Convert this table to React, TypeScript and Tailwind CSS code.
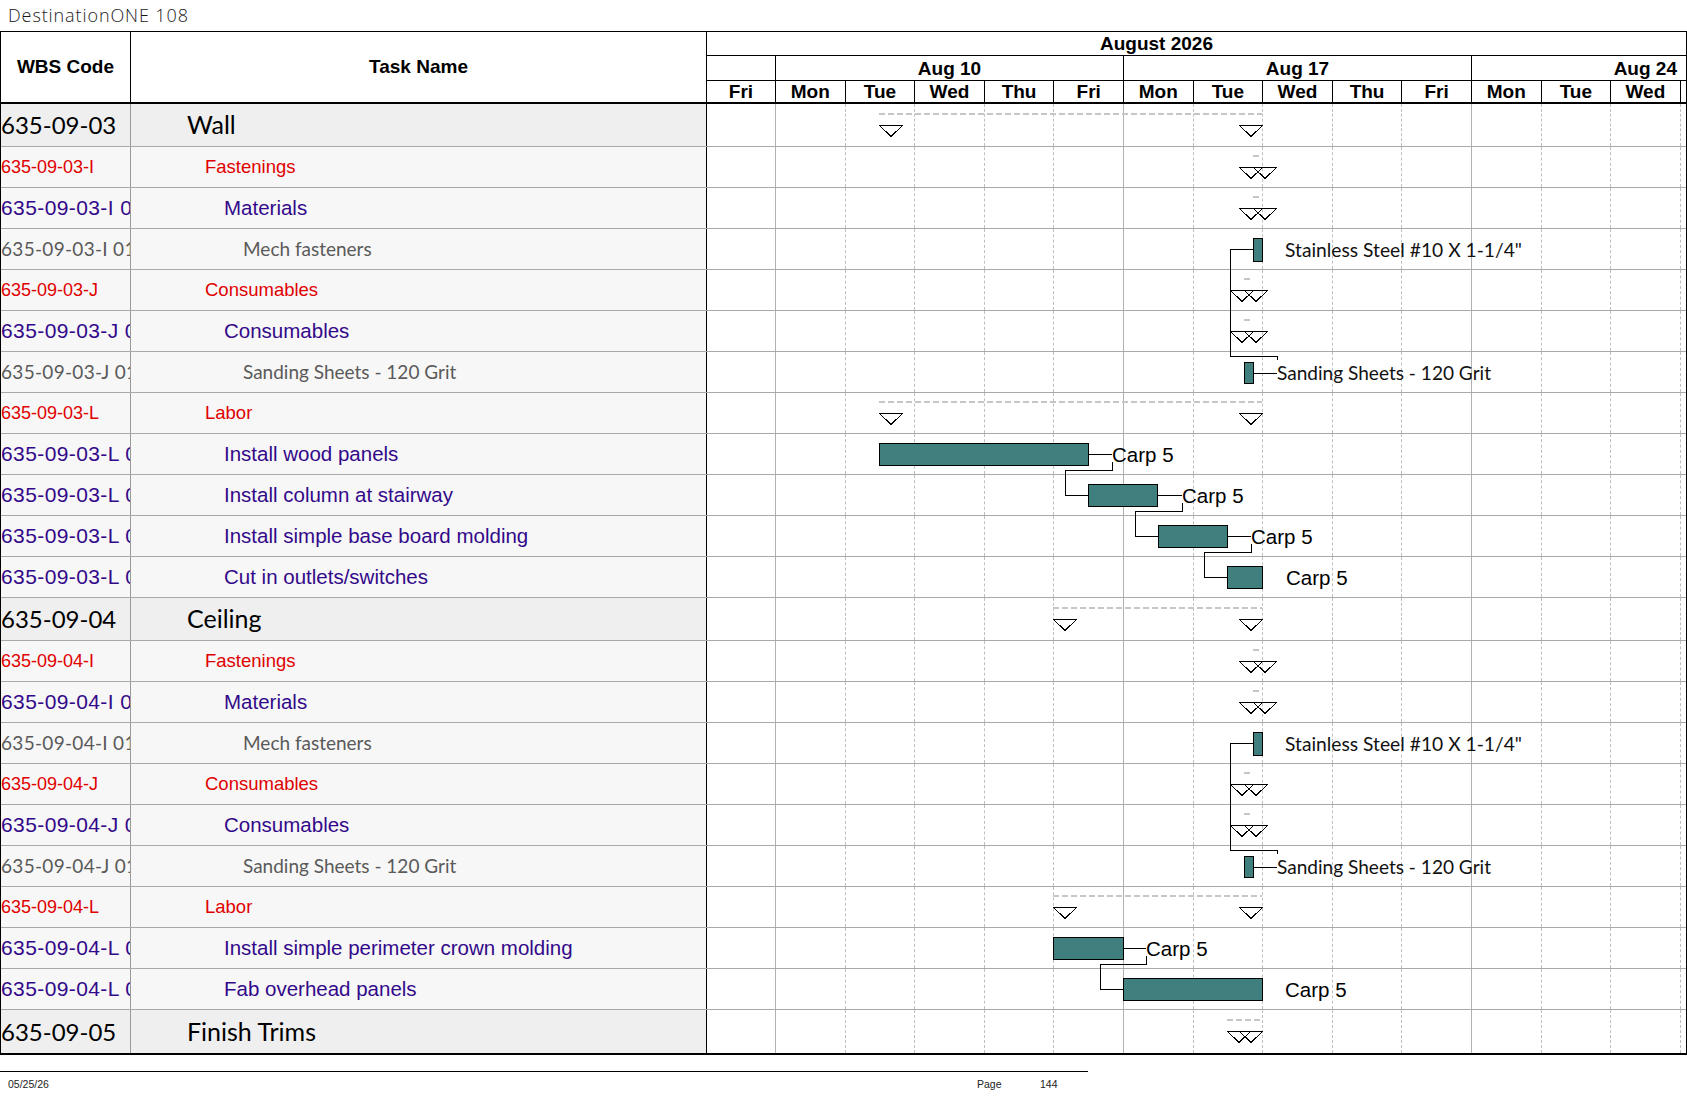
import React from "react";

type Row = { wbs: string; name: string; lvl: 1 | 2 | 3 | 4 };

const rows: Row[] = [
  { wbs: "635-09-03", name: "Wall", lvl: 1 },
  { wbs: "635-09-03-I", name: "Fastenings", lvl: 2 },
  { wbs: "635-09-03-I 01", name: "Materials", lvl: 3 },
  { wbs: "635-09-03-I 01-001", name: "Mech fasteners", lvl: 4 },
  { wbs: "635-09-03-J", name: "Consumables", lvl: 2 },
  { wbs: "635-09-03-J 01", name: "Consumables", lvl: 3 },
  { wbs: "635-09-03-J 01-001", name: "Sanding Sheets - 120 Grit", lvl: 4 },
  { wbs: "635-09-03-L", name: "Labor", lvl: 2 },
  { wbs: "635-09-03-L 01", name: "Install wood panels", lvl: 3 },
  { wbs: "635-09-03-L 02", name: "Install column at stairway", lvl: 3 },
  { wbs: "635-09-03-L 03", name: "Install simple base board molding", lvl: 3 },
  { wbs: "635-09-03-L 04", name: "Cut in outlets/switches", lvl: 3 },
  { wbs: "635-09-04", name: "Ceiling", lvl: 1 },
  { wbs: "635-09-04-I", name: "Fastenings", lvl: 2 },
  { wbs: "635-09-04-I 01", name: "Materials", lvl: 3 },
  { wbs: "635-09-04-I 01-001", name: "Mech fasteners", lvl: 4 },
  { wbs: "635-09-04-J", name: "Consumables", lvl: 2 },
  { wbs: "635-09-04-J 01", name: "Consumables", lvl: 3 },
  { wbs: "635-09-04-J 01-001", name: "Sanding Sheets - 120 Grit", lvl: 4 },
  { wbs: "635-09-04-L", name: "Labor", lvl: 2 },
  { wbs: "635-09-04-L 01", name: "Install simple perimeter crown molding", lvl: 3 },
  { wbs: "635-09-04-L 02", name: "Fab overhead panels", lvl: 3 },
  { wbs: "635-09-05", name: "Finish Trims", lvl: 1 },
];

const heights = rows.map((r) => (r.lvl === 1 ? 43 : 41));
const tops: number[] = [];
{
  let y = 104;
  for (const h of heights) {
    tops.push(y);
    y += h;
  }
}

const nameClass: Record<number, string> = {
  1: "font-['Lato',sans-serif] text-[25px] text-black",
  2: "font-['Liberation_Sans',Arial,sans-serif] text-[18.5px] text-[#e00000]",
  3: "font-['Liberation_Sans',Arial,sans-serif] text-[20.5px] text-[#33098a]",
  4: "font-['Lato',sans-serif] text-[19px] text-[#5a5a5a]",
};
const wbsClass: Record<number, string> = {
  1: "font-['Lato',sans-serif] text-[24px] text-black",
  2: "font-['Liberation_Sans',Arial,sans-serif] text-[18px] text-[#e00000]",
  3: "font-['Liberation_Sans',Arial,sans-serif] text-[21px] tracking-[0.4px] text-[#33098a]",
  4: "font-['Lato',sans-serif] text-[19px] tracking-[0.3px] text-[#5a5a5a]",
};
const indentClass: Record<number, string> = {
  1: "pl-[56px]",
  2: "pl-[74px]",
  3: "pl-[93px]",
  4: "pl-[112px]",
};

const dayNames = ["Fri", "Mon", "Tue", "Wed", "Thu", "Fri", "Mon", "Tue", "Wed", "Thu", "Fri", "Mon", "Tue", "Wed", ""];

function BodyDays() {
  return (
    <div className="grid h-full grid-cols-[69px_repeat(13,69.6px)_1fr]">
      {dayNames.map((_, i) => {
        if (i === 14) return <div key={i} />;
        const solid = i === 0 || i === 5 || i === 10;
        return (
          <div
            key={i}
            className={
              solid
                ? "border-r border-[#b2b2b2]"
                : "border-r border-dashed border-[#bfbfbf]"
            }
          />
        );
      })}
    </div>
  );
}

function Tri({ x, y }: { x: number; y: number }) {
  return (
    <path
      d={`M${x + 0.5} ${y + 0.5}H${x + 23.5}L${x + 12} ${y + 11.5}Z`}
      fill="none"
      stroke="#000"
      strokeWidth={1}
    />
  );
}

function Summary({ r, s, e }: { r: number; s: number; e: number }) {
  const t = tops[r];
  const g = rows[r].lvl === 1;
  const dy = g ? 10 : 9;
  const ty = g ? 21 : 20;
  return (
    <g>
      <line x1={s} x2={e} y1={t + dy} y2={t + dy} stroke="#c6c6c6" strokeWidth={2} strokeDasharray="6 3" />
      <Tri x={e - 23} y={t + ty} />
      <Tri x={s} y={t + ty} />
    </g>
  );
}

function Bar({ r, x1, x2 }: { r: number; x1: number; x2: number }) {
  const t = tops[r];
  return (
    <rect x={x1 + 0.5} y={t + 9.5} width={x2 - x1} height={22} fill="#3f7f7e" stroke="#000" strokeWidth={1} />
  );
}

function Carp({ r, x }: { r: number; x: number }) {
  return (
    <text x={x} y={tops[r] + 28} fontFamily="'Liberation Sans', Arial, sans-serif" fontSize={20.5} fill="#000">
      Carp 5
    </text>
  );
}

function Leader({ r, x1, x2 }: { r: number; x1: number; x2: number }) {
  const y = tops[r] + 20.5;
  return <line x1={x1} x2={x2} y1={y} y2={y} stroke="#000" strokeWidth={1} />;
}

function Dep({ r, L, next }: { r: number; L: number; next: number }) {
  const t = tops[r];
  const nt = tops[r + 1];
  const bx = next - 22.5;
  const d = `M${L + 0.5} ${t + 28}V${t + 36.5}H${bx}V${nt + 20.5}H${next}`;
  return <path d={d} fill="none" stroke="#000" strokeWidth={1} />;
}

function MechGroup({ mech, sand }: { mech: number; sand: number }) {
  const mt = tops[mech];
  const st = tops[sand];
  return (
    <g>
      <rect x={1253.5} y={mt + 9.5} width={9} height={23} fill="#3f7f7e" stroke="#000" strokeWidth={1} />
      <text
        x={1285}
        y={mt + 28}
        fontFamily="Lato, sans-serif"
        fontSize={18.6}
        fill="#111"
        textLength={237}
        lengthAdjust="spacingAndGlyphs"
      >
        Stainless Steel #10 X 1-1/4"
      </text>
      <path
        d={`M1253 ${mt + 20.5}H1230.5V${st + 4.5}H1277.5V${st + 8}`}
        fill="none"
        stroke="#000"
        strokeWidth={1}
      />
      <rect x={1244.5} y={st + 10.5} width={9} height={21} fill="#3f7f7e" stroke="#000" strokeWidth={1} />
      <line x1={1254} x2={1277} y1={st + 21.5} y2={st + 21.5} stroke="#000" strokeWidth={1} />
      <text
        x={1277}
        y={st + 28}
        fontFamily="Lato, sans-serif"
        fontSize={18.6}
        fill="#111"
        textLength={214}
        lengthAdjust="spacingAndGlyphs"
      >
        Sanding Sheets - 120 Grit
      </text>
    </g>
  );
}

function Overlay() {
  return (
    <svg
      className="pointer-events-none absolute left-0 top-0"
      width={1687}
      height={1097}
      viewBox="0 0 1687 1097"
      shapeRendering="crispEdges"
    >
      {/* Wall */}
      <Summary r={0} s={879} e={1262} />
      <Summary r={1} s={1253} e={1262} />
      <Summary r={2} s={1253} e={1262} />
      <Summary r={4} s={1244} e={1253} />
      <Summary r={5} s={1244} e={1253} />
      <MechGroup mech={3} sand={6} />
      <Summary r={7} s={879} e={1262} />
      <Bar r={8} x1={879} x2={1088} />
      <Leader r={8} x1={1089} x2={1112} />
      <Carp r={8} x={1112} />
      <Dep r={8} L={1112} next={1088} />
      <Bar r={9} x1={1088} x2={1157} />
      <Leader r={9} x1={1158} x2={1182} />
      <Carp r={9} x={1182} />
      <Dep r={9} L={1182} next={1158} />
      <Bar r={10} x1={1158} x2={1227} />
      <Leader r={10} x1={1228} x2={1251} />
      <Carp r={10} x={1251} />
      <Dep r={10} L={1251} next={1227} />
      <Bar r={11} x1={1227} x2={1262} />
      <Carp r={11} x={1286} />

      {/* Ceiling */}
      <Summary r={12} s={1053} e={1262} />
      <Summary r={13} s={1253} e={1262} />
      <Summary r={14} s={1253} e={1262} />
      <Summary r={16} s={1244} e={1253} />
      <Summary r={17} s={1244} e={1253} />
      <MechGroup mech={15} sand={18} />
      <Summary r={19} s={1053} e={1262} />
      <Bar r={20} x1={1053} x2={1123} />
      <Leader r={20} x1={1124} x2={1146} />
      <Carp r={20} x={1146} />
      <Dep r={20} L={1146} next={1123} />
      <Bar r={21} x1={1123} x2={1262} />
      <Carp r={21} x={1285} />

      {/* Finish Trims */}
      <Summary r={22} s={1227} e={1262} />
    </svg>
  );
}

export default function App() {
  return (
    <div className="relative h-[1097px] w-[1687px] overflow-hidden bg-white">
      <div className="flex h-[31px] items-center pl-[8px] font-['Open_Sans',sans-serif] text-[18px] font-light tracking-[0.9px] text-[#1a1a1a]">
        DestinationONE 108
      </div>

      <div className="w-[1687px] border-x border-t border-b-2 border-black">
        {/* Header */}
        <div className="flex h-[72px] border-b-2 border-black font-['Liberation_Sans',Arial,sans-serif] text-[19px] font-bold text-black">
          <div className="flex w-[130px] shrink-0 items-center justify-center border-r border-black">WBS Code</div>
          <div className="flex w-[576px] shrink-0 items-center justify-center border-r border-black">Task Name</div>
          <div className="flex min-w-0 flex-1 flex-col">
            <div className="flex h-[24px] items-center border-b border-black pl-[393px] leading-none">August 2026</div>
            <div className="grid h-[25px] grid-cols-[69px_348px_348px_1fr] border-b border-black leading-none">
              <div className="border-r border-black" />
              <div className="flex items-center justify-center border-r border-black">Aug 10</div>
              <div className="flex items-center justify-center border-r border-black">Aug 17</div>
              <div className="flex items-center justify-end pr-[9px]">Aug 24</div>
            </div>
            <div className="grid h-[21px] grid-cols-[69px_repeat(13,69.6px)_1fr] leading-none">
              {dayNames.map((d, i) => (
                <div
                  key={i}
                  className={
                    i === 14
                      ? ""
                      : "flex items-center justify-center border-r border-black"
                  }
                >
                  {d}
                </div>
              ))}
            </div>
          </div>
        </div>

        {/* Body */}
        {rows.map((r, i) => {
          const last = i === rows.length - 1;
          const group = r.lvl === 1;
          return (
            <div
              key={i}
              className={
                (group ? "h-[43px] " : "h-[41px] ") +
                "flex " +
                (last ? "" : "border-b border-[#a9a9a9]")
              }
            >
              <div
                className={
                  "flex w-[130px] shrink-0 items-center overflow-hidden whitespace-nowrap border-r border-[#9a9a9a] " +
                  (group ? "bg-[#efefef] " : "bg-[#f7f7f7] ") +
                  wbsClass[r.lvl]
                }
              >
                {r.wbs}
              </div>
              <div
                className={
                  "flex w-[576px] shrink-0 items-center overflow-hidden whitespace-nowrap border-r border-black " +
                  (group ? "bg-[#efefef] " : "bg-[#f7f7f7] ") +
                  indentClass[r.lvl] +
                  " " +
                  nameClass[r.lvl]
                }
              >
                {r.name}
              </div>
              <div className="min-w-0 flex-1 bg-white">
                <BodyDays />
              </div>
            </div>
          );
        })}
      </div>

      {/* Footer */}
      <div className="mt-[16px] w-[1088px] border-t border-black font-['Liberation_Sans',Arial,sans-serif] text-[10.5px] text-[#222]">
        <div className="flex pt-[5px]">
          <span className="w-[977px] pl-[8px]">05/25/26</span>
          <span className="w-[63px]">Page</span>
          <span>144</span>
        </div>
      </div>

      <Overlay />
    </div>
  );
}
